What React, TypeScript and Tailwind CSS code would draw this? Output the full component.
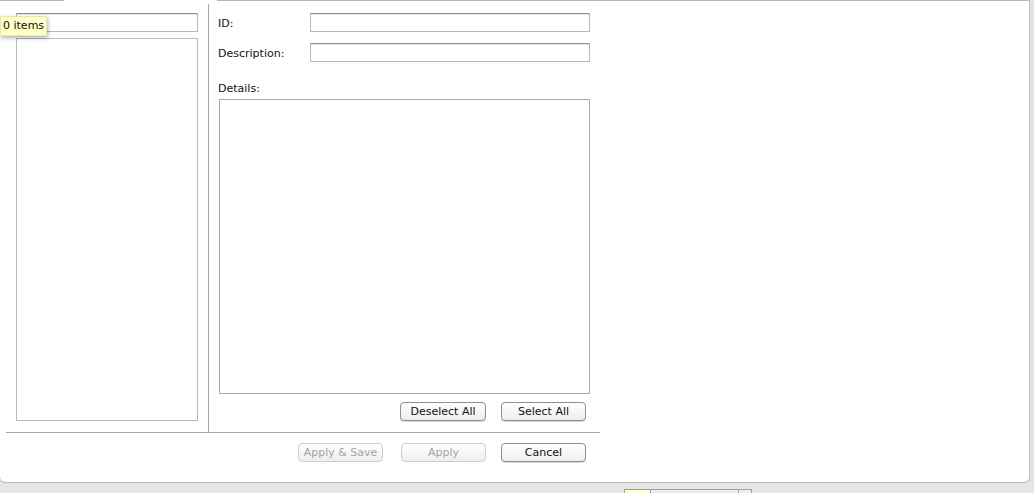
import React from "react";

const font = { fontFamily: '"DejaVu Sans", "Liberation Sans", sans-serif' };

function TextBox({ className = "" }: { className?: string }) {
  return (
    <div
      className={
        "bg-white border border-[#b8b8b8] border-t-[#8f8f8f] shadow-[inset_0_1px_0_#e6e6e6] " +
        className
      }
    />
  );
}

function Button({ label, disabled = false, className = "" }: { label: string; disabled?: boolean; className?: string }) {
  return (
    <div
      className={
        "h-[19px] rounded-[4px] border flex items-center justify-center text-[11px] leading-none bg-gradient-to-b from-white to-[#eeeeee] " +
        (disabled
          ? "border-[#cfcfcf] text-[#a3a3a3]"
          : "border-[#8e8e8e] text-[#111] shadow-[0_1px_0_#d8d8d8]") +
        " " +
        className
      }
    >
      {label}
    </div>
  );
}

export default function App() {
  return (
    <div className="w-[1034px] h-[493px] bg-[#e6e6e6] overflow-hidden relative" style={font}>
      <div className="flex h-[482px]">
        <div className="w-[1029px] h-[482px] bg-white rounded-br-[5px] rounded-bl-[5px] shadow-[0_1px_1px_#b8b8b8] flex flex-col relative">
          <div className="flex h-px shrink-0">
            <div className="w-[64px] bg-[#b3b7cb]" />
            <div className="w-[153px]" />
            <div className="flex-1 bg-[#b3b7cb]" />
          </div>
          <div className="flex pl-[6px] h-[431px]">
            <div className="w-[202px] flex flex-col">
              <TextBox className="ml-[10px] mt-[12px] w-[182px] h-[19px]" />
              <div className="ml-[10px] mt-[6px] w-[182px] h-[383px] border border-[#b9b9b9]" />
            </div>
            <div className="w-[392px] mt-[3px] border-l border-[#a6a6a6] pl-[9px] flex flex-col">
              <div className="flex items-center h-[19px] mt-[9px]">
                <span className="w-[92px] pt-[3px] text-[11px] text-[#111]">ID:</span>
                <TextBox className="w-[280px] h-[19px]" />
              </div>
              <div className="flex items-center h-[19px] mt-[11px]">
                <span className="w-[92px] pt-[3px] text-[11px] text-[#111]">Description:</span>
                <TextBox className="w-[280px] h-[19px]" />
              </div>
              <div className="text-[11px] text-[#111] mt-[20px] leading-[13px]">Details:</div>
              <div className="mt-[4px] ml-px w-[371px] h-[295px] border border-[#a9a9a9]" />
              <div className="flex mt-[8px] ml-[182px]">
                <Button label="Deselect All" className="w-[86px]" />
                <Button label="Select All" className="w-[85px] ml-[15px]" />
              </div>
            </div>
          </div>
          <div className="ml-[6px] w-[594px] border-t border-[#a6a6a6]" />
          <div className="flex mt-[10px] ml-[298px]">
            <Button label="Apply & Save" disabled className="w-[85px]" />
            <Button label="Apply" disabled className="w-[85px] ml-[18px]" />
            <Button label="Cancel" className="w-[85px] ml-[15px]" />
          </div>
          <div className="absolute left-0 top-[16px] h-[20px] w-[47px] bg-[#ffffc7] border border-[#e6e6b0] shadow-[1px_2px_4px_rgba(0,0,0,0.3)] flex items-center pl-[2px] text-[11px] text-[#111]">
            0 items
          </div>
        </div>
        <div className="w-px bg-[#c4c4c4]" />
        <div className="flex-1 bg-[#e2e2e2]" />
      </div>
      <div className="flex ml-[624px] mt-[7px] h-[4px]">
        <div className="w-[26px] bg-[#ffffd0] border-t border-l border-[#a0a0a0]" />
        <div className="w-[88px] bg-[#ececec] border-t border-l border-[#a0a0a0]" />
        <div className="w-[14px] bg-[#ececec] border-t border-l border-r border-[#a0a0a0]" />
      </div>
    </div>
  );
}
